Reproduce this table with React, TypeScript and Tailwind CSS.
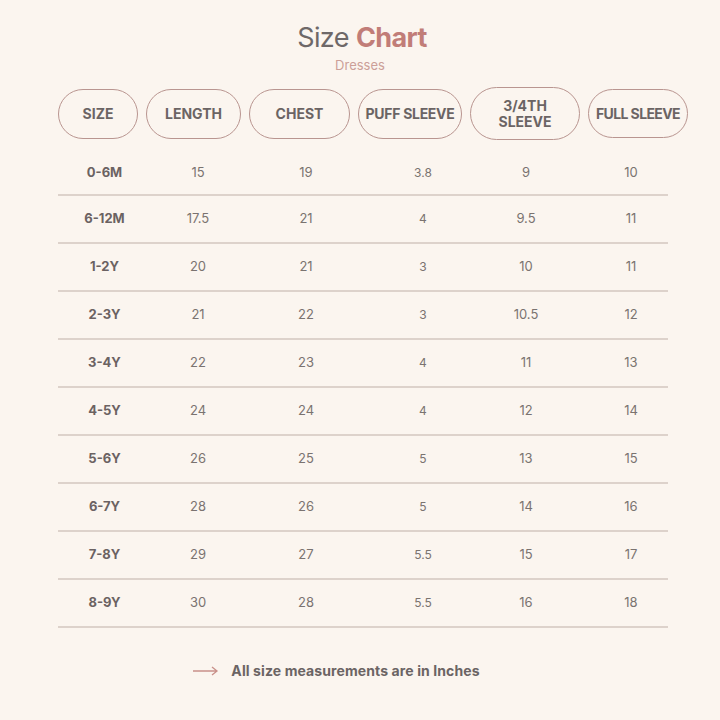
import React from 'react';

const heads = [
  { label: 'SIZE', w: 'w-[80px] h-[50px]' },
  { label: 'LENGTH', w: 'w-[95px] h-[50px]' },
  { label: 'CHEST', w: 'w-[101px] h-[50px]' },
  { label: 'PUFF SLEEVE', w: 'w-[104px] h-[50px] tracking-[-0.3px]' },
  { label: '3/4TH SLEEVE', w: 'w-[110px] h-[53px] px-[20px]' },
  { label: 'FULL SLEEVE', w: 'w-[100px] h-[49px] whitespace-nowrap tracking-[-0.6px]' },
];

const rows = [
  ['0-6M', '15', '19', '3.8', '9', '10'],
  ['6-12M', '17.5', '21', '4', '9.5', '11'],
  ['1-2Y', '20', '21', '3', '10', '11'],
  ['2-3Y', '21', '22', '3', '10.5', '12'],
  ['3-4Y', '22', '23', '4', '11', '13'],
  ['4-5Y', '24', '24', '4', '12', '14'],
  ['5-6Y', '26', '25', '5', '13', '15'],
  ['6-7Y', '28', '26', '5', '14', '16'],
  ['7-8Y', '29', '27', '5.5', '15', '17'],
  ['8-9Y', '30', '28', '5.5', '16', '18'],
];

const App = () => {
  return (
    <div className="w-[720px] h-[720px] bg-[#fbf5ef] font-['Inter',sans-serif] flex flex-col items-center pt-[20px]">
      <h1 className="text-[27px] leading-[36px] tracking-[-0.6px] text-[#6e6868] ml-[4px]">
        Size <span className="font-bold text-[#c17d78]">Chart</span>
      </h1>
      <p className="text-[13px] leading-[16px] text-[#cc9f98] mt-[1px]">Dresses</p>

      <div className="flex items-center w-[627px] mt-[14px] self-start ml-[58px] gap-[8px]">
        {heads.map((h, i) => (
          <div
            key={i}
            className={`${h.w} shrink-0 rounded-full border-[1.5px] border-[#b99590] flex items-center justify-center text-center text-[14px] leading-[16px] font-bold text-[#6b6464]`}
          >
            {h.label}
          </div>
        ))}
      </div>

      <div className="self-start ml-[58px] w-[610px] mt-[11px]">
        {rows.map((r, i) => (
          <div
            key={i}
            className={`grid grid-cols-[92px_96px_120px_114px_92px_96px] items-center border-b-2 border-[#ddd2cb] ${i === 0 ? 'h-[45px]' : 'h-[48px]'}`}
          >
            {r.map((c, j) => (
              <div
                key={j}
                className={
                  j === 0
                    ? 'text-center text-[13px] font-bold text-[#6b6262] pl-[1px]'
                    : j === 5
                    ? 'text-center text-[13px] text-[#7a7370] pl-[22px]'
                    : j === 3
                    ? 'text-center text-[12px] text-[#7a7370]'
                    : 'text-center text-[13px] text-[#7a7370]'
                }
              >
                {c}
              </div>
            ))}
          </div>
        ))}
      </div>

      <div className="flex items-center gap-[12px] mt-[33px] ml-[-47px]">
        <svg width="26" height="10" viewBox="0 0 26 10" fill="none" stroke="#c9908a" strokeWidth="1.3">
          <path d="M0 5 H24 M19 1 L24 5 L19 9" />
        </svg>
        <span className="text-[14px] leading-[20px] font-bold text-[#6b6464] tracking-[0.1px]">All size measurements are in Inches</span>
      </div>
    </div>
  );
};

export default App;
